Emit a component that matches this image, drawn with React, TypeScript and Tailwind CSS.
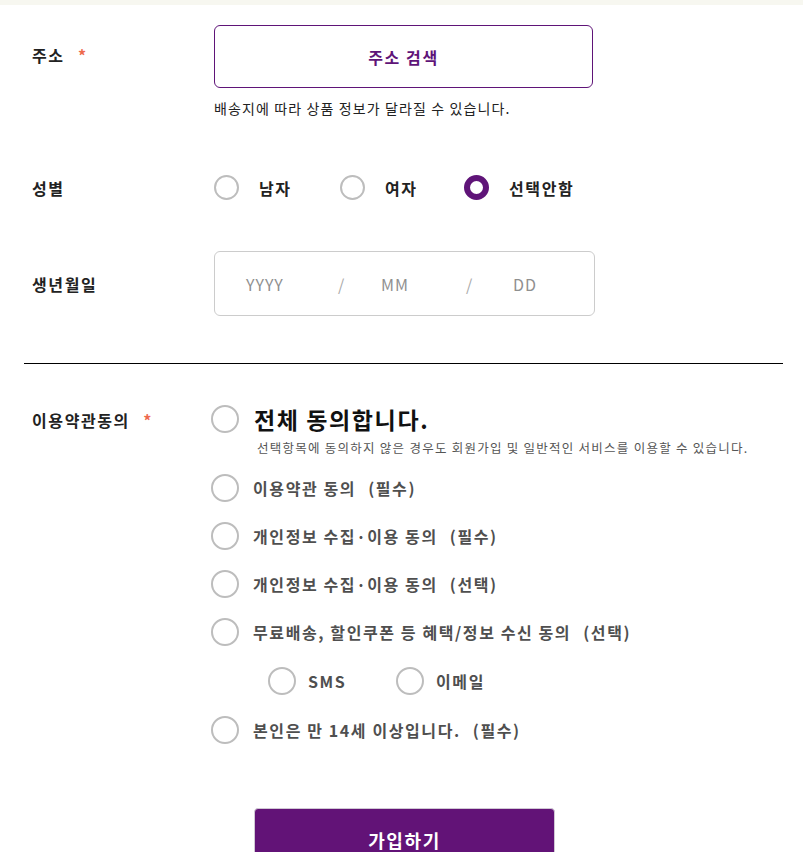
const FONT = { fontFamily: '"Noto Sans CJK KR", "Noto Sans", sans-serif' };

function Circle({ size = 28, checked = false }: { size?: number; checked?: boolean }) {
  return (
    <span
      className={
        "inline-block shrink-0 rounded-full " +
        (checked ? "border-[6px] border-[#5f1478]" : "border-2 border-[#bdbdbd]")
      }
      style={{ width: size, height: size }}
    />
  );
}

function Gender({ label, checked, className }: { label: string; checked?: boolean; className?: string }) {
  return (
    <label className={"flex items-center " + (className ?? "")}>
      <Circle size={25} checked={checked} />
      <span className="ml-5 text-[16px] font-bold text-[#222]">{label}</span>
    </label>
  );
}

function Agree({ label, tail }: { label: string; tail?: string }) {
  return (
    <div className="flex h-12 items-center">
      <Circle />
      <span className="ml-[14px] text-[16px] font-bold text-[#4f4f4f]">
        {label}
        {tail && <span className="ml-3">{tail}</span>}
      </span>
    </div>
  );
}

export default function App() {
  return (
    <div className="min-h-[852px] w-[803px] overflow-hidden bg-white tracking-[0.1em]" style={FONT}>
      <div className="h-[5px] bg-[#f7f7f0]" />

      {/* 주소 */}
      <div className="flex px-8 pt-5">
        <div className="w-[182px] pt-[18px] text-[16px] font-bold text-[#222]">
          주소 <span className="ml-2 text-[#ee6a4e]">*</span>
        </div>
        <div>
          <button className="flex h-[63px] w-[379px] items-center justify-center rounded-md border border-[#5f1478] text-[16px] font-bold tracking-[0.1em] text-[#5f1478]">
            주소 검색
          </button>
          <p className="mt-[10px] text-[14px] tracking-[0.08em] text-[#222]">
            배송지에 따라 상품 정보가 달라질 수 있습니다.
          </p>
        </div>
      </div>

      {/* 성별 */}
      <div className="mt-[56px] flex items-center px-8">
        <div className="w-[182px] text-[16px] font-bold text-[#222]">성별</div>
        <Gender label="남자" className="w-[126px]" />
        <Gender label="여자" className="w-[124px]" />
        <Gender label="선택안함" checked />
      </div>

      {/* 생년월일 */}
      <div className="mt-[51px] flex items-center px-8">
        <div className="w-[182px] text-[16px] font-bold text-[#222]">생년월일</div>
        <div className="flex h-[65px] w-[381px] items-center rounded-md border border-[#cccccc] pl-[31px] text-[16px] tracking-[0.06em] text-[#8f8f8f]">
          <span className="w-[92px]">YYYY</span>
          <span className="w-[43px] text-[#aaaaaa]">/</span>
          <span className="w-[85px]">MM</span>
          <span className="w-[47px] text-[#aaaaaa]">/</span>
          <span>DD</span>
        </div>
      </div>

      <div className="ml-6 mr-5 mt-[47px] h-px bg-black" />

      {/* 이용약관동의 */}
      <div className="mt-[38px] flex px-8">
        <div className="w-[179px] pt-[6px] text-[16px] font-bold text-[#222]">
          이용약관동의 <span className="ml-2 text-[#ee6a4e]">*</span>
        </div>
        <div>
          <div className="flex items-center">
            <Circle />
            <span className="ml-[15px] text-[23px] font-bold text-[#111]">전체 동의합니다.</span>
          </div>
          <p className="ml-[46px] mt-[2px] text-[12.5px] tracking-[0.1em] text-[#555]">
            선택항목에 동의하지 않은 경우도 회원가입 및 일반적인 서비스를 이용할 수 있습니다.
          </p>
          <div className="mt-[7px]">
            <Agree label="이용약관 동의" tail="(필수)" />
            <Agree label="개인정보 수집·이용 동의" tail="(필수)" />
            <Agree label="개인정보 수집·이용 동의" tail="(선택)" />
            <Agree label="무료배송, 할인쿠폰 등 혜택/정보 수신 동의" tail="(선택)" />
            <div className="ml-[57px] flex h-[50px] items-center">
              <Circle />
              <span className="ml-3 w-[88px] text-[16px] font-bold text-[#4f4f4f]">SMS</span>
              <Circle />
              <span className="ml-3 text-[16px] font-bold text-[#4f4f4f]">이메일</span>
            </div>
            <Agree label="본인은 만 14세 이상입니다." tail="(필수)" />
          </div>
        </div>
      </div>

      <div className="mt-[54px] flex justify-center pl-[6px]">
        <button className="h-[60px] w-[301px] rounded-t-[4px] border border-[#d0c8d4] bg-[#621377] pt-1 text-[18px] font-bold text-white">
          가입하기
        </button>
      </div>
    </div>
  );
}
